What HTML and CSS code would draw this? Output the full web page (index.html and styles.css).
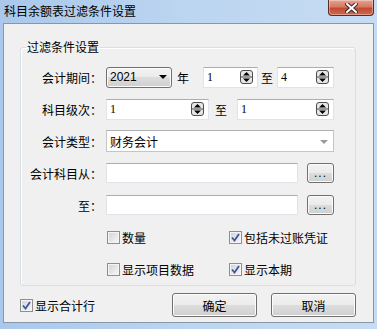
FILE: index.html
```html
<!DOCTYPE html>
<html lang="zh-CN">
<head>
    <meta charset="UTF-8">
    <title>科目余额表过滤条件设置</title>
    <link rel="stylesheet" href="styles.css">
</head>
<body>
    <div class="window">
        <!-- 标题栏 -->
        <div class="titlebar">
            <span class="title">科目余额表过滤条件设置</span>
            <span class="closeBtn">
                <svg width="13" height="10" viewBox="0 0 13 10">
                    <path d="M2 1 L11 9 M11 1 L2 9" stroke="#3a2a2a" stroke-width="4" stroke-linecap="square"/>
                    <path d="M2 1 L11 9 M11 1 L2 9" stroke="#fff" stroke-width="2" stroke-linecap="square"/>
                </svg>
            </span>
        </div>

        <div class="client">
            <fieldset class="group">
                <legend>过滤条件设置</legend>

                <!-- 会计期间 -->
                <div class="row">
                    <span class="lbl">会计期间：</span>
                    <div class="combo comboYear">
                        <span class="num">2021</span>
                        <span class="arrow"></span>
                    </div>
                    <span class="word wordYear">年</span>
                    <div class="field spin spinFrom">
                        <span class="serif">1</span>
                        <svg class="spinIcon" width="13" height="14" viewBox="0 0 13 14"><rect x="0.5" y="0.5" width="12" height="13" rx="2.5" fill="#e6e6e6" stroke="#4d4d4d"/><line x1="1" y1="7" x2="12" y2="7" stroke="#4d4d4d"/><path d="M3 5.5h7L6.5 2z" fill="#000"/><path d="M3 8.5h7L6.5 12z" fill="#000"/></svg>
                    </div>
                    <span class="word wordTo">至</span>
                    <div class="field spin spinTo">
                        <span class="serif">4</span>
                        <svg class="spinIcon" width="13" height="14" viewBox="0 0 13 14"><rect x="0.5" y="0.5" width="12" height="13" rx="2.5" fill="#e6e6e6" stroke="#4d4d4d"/><line x1="1" y1="7" x2="12" y2="7" stroke="#4d4d4d"/><path d="M3 5.5h7L6.5 2z" fill="#000"/><path d="M3 8.5h7L6.5 12z" fill="#000"/></svg>
                    </div>
                </div>

                <!-- 科目级次 -->
                <div class="row">
                    <span class="lbl">科目级次：</span>
                    <div class="field spin levelFrom">
                        <span class="serif">1</span>
                        <svg class="spinIcon" width="13" height="14" viewBox="0 0 13 14"><rect x="0.5" y="0.5" width="12" height="13" rx="2.5" fill="#e6e6e6" stroke="#4d4d4d"/><line x1="1" y1="7" x2="12" y2="7" stroke="#4d4d4d"/><path d="M3 5.5h7L6.5 2z" fill="#000"/><path d="M3 8.5h7L6.5 12z" fill="#000"/></svg>
                    </div>
                    <span class="word levelWord">至</span>
                    <div class="field spin levelTo">
                        <span class="serif">1</span>
                        <svg class="spinIcon" width="13" height="14" viewBox="0 0 13 14"><rect x="0.5" y="0.5" width="12" height="13" rx="2.5" fill="#e6e6e6" stroke="#4d4d4d"/><line x1="1" y1="7" x2="12" y2="7" stroke="#4d4d4d"/><path d="M3 5.5h7L6.5 2z" fill="#000"/><path d="M3 8.5h7L6.5 12z" fill="#000"/></svg>
                    </div>
                </div>

                <!-- 会计类型 -->
                <div class="row">
                    <span class="lbl">会计类型：</span>
                    <div class="field comboType">
                        <span>财务会计</span>
                        <span class="grayArrow"></span>
                    </div>
                </div>

                <!-- 会计科目 -->
                <div class="row">
                    <span class="lbl">会计科目从：</span>
                    <div class="field acctField"></div>
                    <button class="btn dotBtn">...</button>
                </div>

                <div class="row">
                    <span class="lbl">至：</span>
                    <div class="field acctField"></div>
                    <button class="btn dotBtn">...</button>
                </div>

                <!-- 选项 -->
                <div class="row checkRow">
                    <span class="check"><span class="box"></span>数量</span>
                    <span class="check"><span class="box checked"><svg width="9" height="9" viewBox="0 0 9 9"><path d="M1 4.5 L3.5 7.5 L8 1" stroke="#3b57a6" stroke-width="1.8" fill="none"/></svg></span>包括未过账凭证</span>
                </div>

                <div class="row checkRow">
                    <span class="check"><span class="box"></span>显示项目数据</span>
                    <span class="check"><span class="box checked"><svg width="9" height="9" viewBox="0 0 9 9"><path d="M1 4.5 L3.5 7.5 L8 1" stroke="#3b57a6" stroke-width="1.8" fill="none"/></svg></span>显示本期</span>
                </div>
            </fieldset>

            <!-- 底部 -->
            <div class="footer">
                <span class="check"><span class="box checked"><svg width="9" height="9" viewBox="0 0 9 9"><path d="M1 4.5 L3.5 7.5 L8 1" stroke="#3b57a6" stroke-width="1.8" fill="none"/></svg></span>显示合计行</span>
                <button class="btn mainBtn okBtn">确定</button>
                <button class="btn mainBtn">取消</button>
            </div>
        </div>
    </div>
</body>
</html>
```

FILE: styles.css
```css
body {
    margin: 0;
    font-family: "Noto Sans CJK SC", "Liberation Sans", sans-serif;
    font-size: 12px;
    color: #000;
}

.window {
    width: 377px;
    height: 329px;
    box-sizing: border-box;
    padding: 0 3px 6px 3px;
    background: linear-gradient(to right, #a9c8ec, #bcd5f0 50%, #c6dcf2);
    display: flex;
    flex-direction: column;
}

/* 标题栏 */
.titlebar {
    height: 23px;
    display: flex;
    align-items: flex-start;
}

.title {
    padding-left: 1px;
    line-height: 21px;
    color: #000;
}

.closeBtn {
    margin-left: auto;
    width: 44px;
    height: 15px;
    border: 1px solid #5c2a20;
    border-top: none;
    border-radius: 0 0 4px 4px;
    background: linear-gradient(#e8a193 0%, #d57a66 45%, #c24b31 55%, #d0684e 100%);
    box-shadow: inset 0 0 0 1px rgba(255, 255, 255, 0.35);
    display: flex;
    align-items: center;
    justify-content: center;
}

/* 客户区 */
.client {
    flex: 1;
    background-color: #f0f0f0;
    border: 1px solid #8796a8;
    display: flex;
    flex-direction: column;
}

.group {
    margin: 15px 0 0 16px;
    width: 336px;
    height: 247px;
    box-sizing: border-box;
    padding: 11px 0 0 0;
    border: 1px solid #d5dfe5;
    border-radius: 3px;
    box-shadow: inset 1px 1px 0 #fff;
    min-inline-size: 0;
}

.group legend {
    margin-left: 5px;
    padding: 0 1px;
    line-height: 16px;
}

.row {
    height: 22px;
    display: flex;
    align-items: center;
    margin-bottom: 10px;
}

.lbl {
    width: 81px;
    margin-right: 4px;
    text-align: right;
    white-space: nowrap;
}

.word {
    width: 12px;
}

.wordYear {
    margin: 0 14px 0 5px;
}

.wordTo {
    margin: 0 4px 0 3px;
}

.levelWord {
    margin: 0 10px 0 6px;
}

.num {
    font-family: "Liberation Sans", sans-serif;
}

.serif {
    font-family: "Liberation Serif", serif;
}

/* 输入框 */
.field {
    box-sizing: border-box;
    height: 21px;
    background-color: #fff;
    border: 1px solid #e2e3ea;
    border-top-color: #abadb3;
    border-left-color: #e2e3ea;
    display: flex;
    align-items: center;
    padding-left: 3px;
}

.spin {
    justify-content: space-between;
    padding-right: 4px;
}

.spinFrom { width: 55px; }
.spinTo { width: 57px; }
.levelFrom { width: 103px; }
.levelTo { width: 97px; }

.combo {
    box-sizing: border-box;
    height: 21px;
    border: 1px solid #707070;
    border-radius: 3px;
    background: linear-gradient(#f2f2f2 0%, #ebebeb 50%, #dddddd 50%, #cfcfcf 100%);
    box-shadow: inset 0 0 0 1px #fcfcfc;
    display: flex;
    align-items: center;
    justify-content: space-between;
    padding: 0 4px 0 3px;
}

.comboYear {
    width: 66px;
}

.arrow {
    width: 0;
    height: 0;
    border-left: 4px solid transparent;
    border-right: 4px solid transparent;
    border-top: 4px solid #000;
}

.comboType {
    width: 228px;
    height: 22px;
    border-color: #c5c5c5;
    border-top-color: #b0b0b0;
    justify-content: space-between;
    padding-right: 5px;
}

.grayArrow {
    width: 0;
    height: 0;
    border-left: 4px solid transparent;
    border-right: 4px solid transparent;
    border-top: 4px solid #9a9a9a;
    margin-top: 2px;
}

.acctField {
    width: 192px;
    height: 20px;
}

/* 按钮 */
.btn {
    box-sizing: border-box;
    font-family: inherit;
    font-size: 12px;
    color: #000;
    border: 1px solid #707070;
    border-radius: 3px;
    background: linear-gradient(#f2f2f2 0%, #ebebeb 50%, #dddddd 50%, #cfcfcf 100%);
    box-shadow: inset 0 0 0 1px #fcfcfc;
    padding: 0;
    cursor: pointer;
}

.dotBtn {
    width: 27px;
    height: 20px;
    margin-left: 9px;
    font-family: "Liberation Sans", sans-serif;
    letter-spacing: 1px;
    line-height: 12px;
}

.mainBtn {
    width: 85px;
    height: 24px;
}

.okBtn {
    margin-left: auto;
    margin-right: 14px;
}

/* 复选框 */
.checkRow {
    padding-left: 86px;
}

.check {
    display: flex;
    align-items: center;
    white-space: nowrap;
}

.checkRow .check {
    width: 122px;
}

.box {
    box-sizing: border-box;
    width: 13px;
    height: 13px;
    margin-right: 2px;
    border: 1px solid #8f8f8f;
    background: linear-gradient(135deg, #d2d2d2, #f8f8f8);
    box-shadow: inset 0 0 0 1px #f4f4f4;
    display: flex;
    align-items: center;
    justify-content: center;
}

.footer {
    margin-top: 7px;
    padding: 0 17px 0 16px;
    display: flex;
    align-items: center;
}
```
